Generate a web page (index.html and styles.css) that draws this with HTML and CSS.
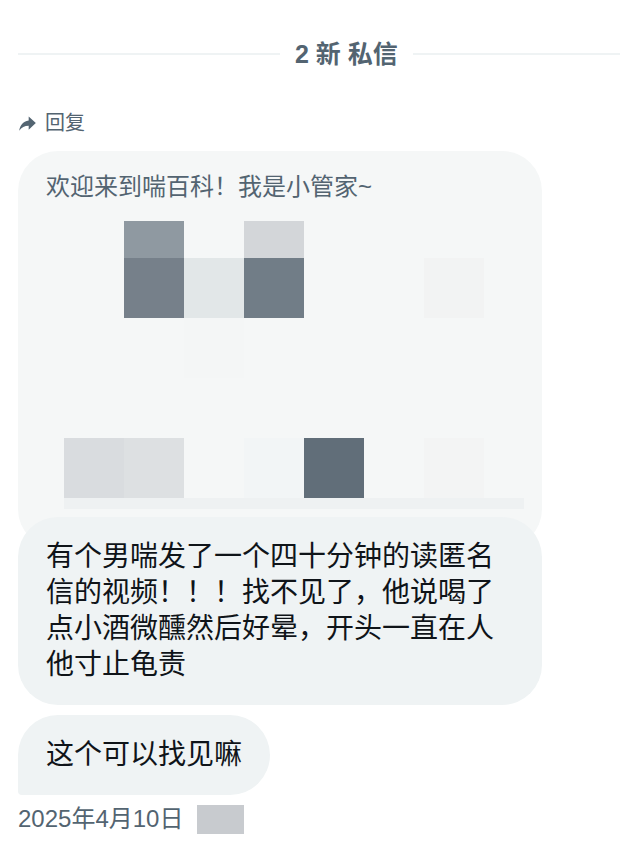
FILE: index.html
```html
<!DOCTYPE html>
<html lang="zh-CN">
<head>
    <meta charset="UTF-8">
    <meta name="viewport" content="width=device-width, initial-scale=1.0">
    <title>私信</title>
    <link rel="stylesheet" href="styles.css">
</head>
<body>
    <div class="page">
        <div class="divider">
            <span class="line line-left"></span>
            <h2>2 新 私信</h2>
            <span class="line"></span>
        </div>

        <div class="reply-label">
            <svg width="19" height="19" viewBox="0 0 24 24" aria-hidden="true">
                <path d="M13.5 3v5.2C6 9.2 2.6 14.6 1.5 21c3-4.3 6.8-6.2 12-6.2V20L22.5 11.5 13.5 3z" fill="#536471"/>
            </svg>
            <span>回复</span>
        </div>

        <div class="thread">
            <!-- quoted message with the blurred picture -->
            <div class="bubble quoted">
                <p>欢迎来到喘百科！我是小管家~</p>
                <svg class="media" width="460" height="288" viewBox="0 0 460 288" aria-hidden="true">
                    <rect x="60" y="0" width="60" height="37" fill="#8f99a1"/>
                    <rect x="180" y="0" width="60" height="37" fill="#d3d6d9"/>
                    <rect x="60" y="37" width="60" height="60" fill="#76808a"/>
                    <rect x="120" y="37" width="60" height="60" fill="#e2e7e8"/>
                    <rect x="180" y="37" width="60" height="60" fill="#717d87"/>
                    <rect x="360" y="37" width="60" height="60" fill="#f2f3f3"/>
                    <rect x="120" y="97" width="60" height="60" fill="#f4f6f6"/>
                    <rect x="0" y="217" width="60" height="60" fill="#d9dcdf"/>
                    <rect x="60" y="217" width="60" height="60" fill="#dde0e2"/>
                    <rect x="180" y="217" width="60" height="60" fill="#f2f5f6"/>
                    <rect x="240" y="217" width="60" height="60" fill="#616e79"/>
                    <rect x="360" y="217" width="60" height="60" fill="#f3f4f4"/>
                    <rect x="0" y="277" width="460" height="11" fill="#eef1f2"/>
                </svg>
            </div>

            <div class="bubble main">有个男喘发了一个四十分钟的读匿名信的视频！！！找不见了，他说喝了点小酒微醺然后好晕，开头一直在人他寸止龟责</div>

            <div class="bubble short">这个可以找见嘛</div>
        </div>

        <div class="meta">
            <span>2025年4月10日</span>
            <span class="redact"></span>
        </div>
    </div>
</body>
</html>
```

FILE: styles.css
```css
/* General Styles */
html, body {
    margin: 0;
    padding: 0;
    background: #fff;
}

body {
    font-family: 'Liberation Sans', 'Noto Sans CJK SC', sans-serif;
    color: #0f1419;
    text-spacing-trim: space-all;
}

.page {
    padding: 38px 0 0 18px;
}

/* Header divider */
.divider {
    display: flex;
    align-items: center;
    gap: 15px;
}

.divider .line {
    flex: 1;
    height: 2px;
    background: #eff3f4;
}

.divider .line-left {
    flex: 0 0 262px;
}

.divider h2 {
    margin: 0;
    font-size: 25px;
    line-height: 32px;
    font-weight: 700;
    color: #536471;
}

.reply-label {
    display: flex;
    align-items: center;
    gap: 8px;
    margin-top: 41px;
    font-size: 20px;
    line-height: 24px;
    color: #536471;
}

/* Message bubbles */
.thread {
    display: flex;
    flex-direction: column;
    align-items: flex-start;
    margin-top: 16px;
}

.bubble {
    box-sizing: border-box;
    max-width: 524px;
    border-radius: 40px;
    padding: 22px 28px;
    font-size: 28px;
    line-height: 36px;
}

.bubble.quoted {
    width: 524px;
    background: #f5f7f7;
    padding: 20px 28px 40px;
    color: #536471;
}

.quoted p {
    margin: 0;
    font-size: 24px;
    line-height: 32px;
}

.quoted .media {
    display: block;
    margin: 18px 0 0 18px;
}

.bubble.main {
    position: relative;
    width: 524px;
    margin-top: -32px;
    background: #eff3f4;
}

.bubble.short {
    margin-top: 10px;
    background: #eff3f4;
    border-bottom-left-radius: 4px;
}

/* Date line */
.meta {
    display: flex;
    align-items: center;
    gap: 14px;
    margin-top: 9px;
    font-size: 24px;
    line-height: 30px;
    color: #536471;
}

.redact {
    width: 47px;
    height: 29px;
    background: #c8cbcf;
}
```
